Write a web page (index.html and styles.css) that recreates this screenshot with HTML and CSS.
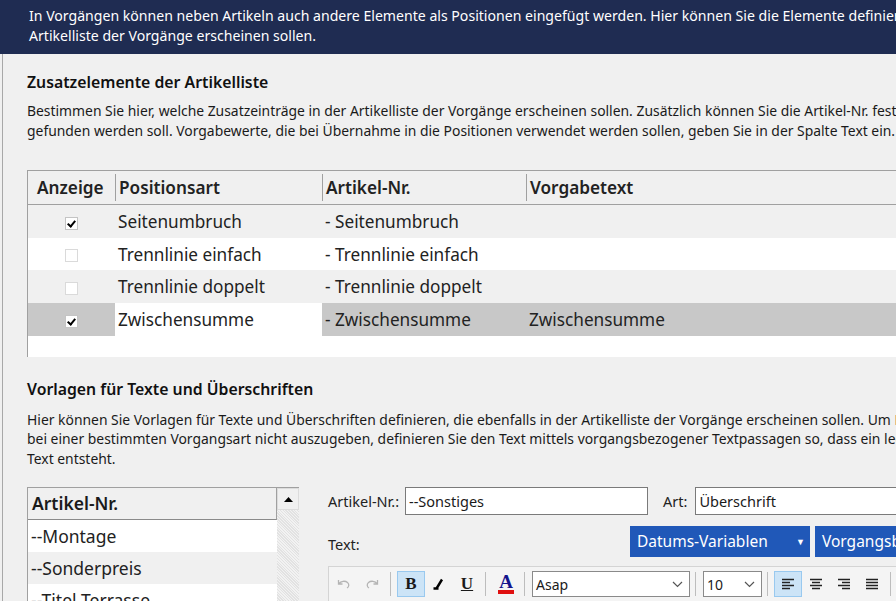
FILE: index.html
```html
<!DOCTYPE html>
<html lang="de">
<head>
  <meta charset="UTF-8">
  <title>Zusatzelemente der Artikelliste</title>
  <link rel="stylesheet" href="styles.css">
</head>
<body>
  <div class="banner">
    In Vorgängen können neben Artikeln auch andere Elemente als Positionen eingefügt werden. Hier können Sie die Elemente definieren, die in der<br>
    Artikelliste der Vorgänge erscheinen sollen.
  </div>

  <div class="page">
    <h2 class="section-title">Zusatzelemente der Artikelliste</h2>
    <p class="section-text">Bestimmen Sie hier, welche Zusatzeinträge in der Artikelliste der Vorgänge erscheinen sollen. Zusätzlich können Sie die Artikel-Nr. festlegen, unter der das Element<br>
      gefunden werden soll. Vorgabewerte, die bei Übernahme in die Positionen verwendet werden sollen, geben Sie in der Spalte Text ein.</p>

    <div class="grid">
      <table class="grid-table">
        <colgroup>
          <col class="col-show">
          <col class="col-type">
          <col class="col-nr">
          <col>
        </colgroup>
        <thead>
          <tr>
            <th class="head-show">Anzeige</th>
            <th><span>Positionsart</span></th>
            <th><span>Artikel-Nr.</span></th>
            <th><span>Vorgabetext</span></th>
          </tr>
        </thead>
        <tbody>
          <tr class="alt">
            <td class="cell-show"><span class="check checked"></span></td>
            <td>Seitenumbruch</td>
            <td>- Seitenumbruch</td>
            <td></td>
          </tr>
          <tr>
            <td class="cell-show"><span class="check"></span></td>
            <td>Trennlinie einfach</td>
            <td>- Trennlinie einfach</td>
            <td></td>
          </tr>
          <tr class="alt">
            <td class="cell-show"><span class="check"></span></td>
            <td>Trennlinie doppelt</td>
            <td>- Trennlinie doppelt</td>
            <td></td>
          </tr>
          <tr class="selected">
            <td class="cell-show"><span class="check checked"></span></td>
            <td class="focus">Zwischensumme</td>
            <td>- Zwischensumme</td>
            <td>Zwischensumme</td>
          </tr>
        </tbody>
      </table>
      <div class="grid-empty"></div>
    </div>

    <h2 class="section-title second">Vorlagen für Texte und Überschriften</h2>
    <p class="section-text second">Hier können Sie Vorlagen für Texte und Überschriften definieren, die ebenfalls in der Artikelliste der Vorgänge erscheinen sollen. Um Diese<br>
      bei einer bestimmten Vorgangsart nicht auszugeben, definieren Sie den Text mittels vorgangsbezogener Textpassagen so, dass ein leerer<br>
      Text entsteht.</p>

    <div class="templates">
      <div class="list">
        <div class="list-body">
          <div class="list-head">Artikel-Nr.</div>
          <div class="list-item">--Montage</div>
          <div class="list-item alt">--Sonderpreis</div>
          <div class="list-item">--Titel Terrasse</div>
        </div>
        <div class="scrollbar">
          <div class="scroll-btn">
            <svg width="9" height="5" viewBox="0 0 9 5"><path d="M0 5 L4.5 0 L9 5 Z" fill="#000"/></svg>
          </div>
          <div class="scroll-track"></div>
        </div>
      </div>

      <div class="editor">
        <div class="form-row">
          <label class="form-label">Artikel-Nr.:</label>
          <div class="input nr-input">--Sonstiges</div>
          <label class="form-label art-label">Art:</label>
          <div class="input art-input">Überschrift</div>
        </div>

        <div class="text-row">
          <span class="form-label">Text:</span>
          <div class="var-buttons">
            <div class="var-btn">Datums-Variablen <span class="caret">&#9660;</span></div>
            <div class="var-btn">Vorgangsbezogene Variablen <span class="caret">&#9660;</span></div>
          </div>
        </div>

        <div class="toolbar">
          <span class="tool">
            <svg width="16" height="16" viewBox="0 0 16 16"><path d="M2.5 4 V8 H6.5 M2.8 7.7 C5 5 9 4.5 11.5 6.5 C13.5 8.2 13 11 11 12" fill="none" stroke="#b4b4b4" stroke-width="1.3"/></svg>
          </span>
          <span class="tool">
            <svg width="16" height="16" viewBox="0 0 16 16"><path d="M13.5 4 V8 H9.5 M13.2 7.7 C11 5 7 4.5 4.5 6.5 C2.5 8.2 3 11 5 12" fill="none" stroke="#b4b4b4" stroke-width="1.3"/></svg>
          </span>
          <span class="sep"></span>
          <span class="tool active bold">B</span>
          <span class="tool">
            <svg width="16" height="16" viewBox="0 0 16 16"><path d="M11 3.5 L5.5 12.5 M2.5 12.5 L7.5 12.5" fill="none" stroke="#000" stroke-width="2.4"/></svg>
          </span>
          <span class="tool underline">U</span>
          <span class="sep"></span>
          <span class="tool color">A<span class="color-bar"></span></span>
          <span class="sep"></span>
          <div class="select font-select">Asap
            <svg width="11" height="7" viewBox="0 0 11 7"><path d="M1 1 L5.5 5.5 L10 1" fill="none" stroke="#555" stroke-width="1.2"/></svg>
          </div>
          <span class="sep"></span>
          <div class="select size-select">10
            <svg width="11" height="7" viewBox="0 0 11 7"><path d="M1 1 L5.5 5.5 L10 1" fill="none" stroke="#555" stroke-width="1.2"/></svg>
          </div>
          <span class="sep"></span>
          <span class="tool active">
            <svg width="16" height="16" viewBox="0 0 16 16"><path d="M2 3.5 H14 M2 6.5 H10 M2 9.5 H14 M2 12.5 H10" stroke="#222" stroke-width="1.4"/></svg>
          </span>
          <span class="tool">
            <svg width="16" height="16" viewBox="0 0 16 16"><path d="M2 3.5 H14 M4 6.5 H12 M2 9.5 H14 M4 12.5 H12" stroke="#222" stroke-width="1.4"/></svg>
          </span>
          <span class="tool">
            <svg width="16" height="16" viewBox="0 0 16 16"><path d="M2 3.5 H14 M6 6.5 H14 M2 9.5 H14 M6 12.5 H14" stroke="#222" stroke-width="1.4"/></svg>
          </span>
          <span class="tool">
            <svg width="16" height="16" viewBox="0 0 16 16"><path d="M2 3.5 H14 M2 6.5 H14 M2 9.5 H14 M2 12.5 H14" stroke="#222" stroke-width="1.4"/></svg>
          </span>
          <span class="sep"></span>
        </div>
      </div>
    </div>
  </div>
</body>
</html>
```

FILE: styles.css
```css
html, body {
  margin: 0;
  padding: 0;
  overflow: hidden;
}
body {
  background-color: #f0f0f0;
  font-family: "Noto Sans", "Open Sans", sans-serif;
  color: #1a1a1a;
  width: 896px;
  height: 601px;
}
.banner {
  background-color: #1f2c52;
  color: #fff;
  font-size: 14.1px;
  line-height: 20px;
  padding: 6px 0 8px 29px;
  height: 40px;
  white-space: nowrap;
  overflow: hidden;
}
.page {
  margin-left: 2px;
  border-left: 1px solid #a8a8a8;
  padding-left: 24px;
  height: 547px;
  overflow: hidden;
}
.section-title {
  margin: 0;
  padding-top: 17px;
  font-size: 15.8px;
  font-weight: 600;
  line-height: 22px;
  color: #111;
  white-space: nowrap;
}
.section-title.second {
  padding-top: 21px;
}
.section-text {
  margin: 8px 0 0;
  font-size: 13.9px;
  line-height: 19.5px;
  white-space: nowrap;
}
.section-text.second {
  margin-top: 10px;
}

/* grid of additional elements */
.grid {
  margin-top: 30px;
  border-top: 1px solid #a0a0a0;
  border-left: 1px solid #a0a0a0;
  width: 1000px;
  background-color: #fff;
}
.grid-table {
  border-collapse: collapse;
  table-layout: fixed;
  width: 100%;
  font-size: 17.2px;
}
.col-show { width: 87px; }
.col-type { width: 207px; }
.col-nr { width: 204px; }
.grid-table th {
  background-color: #f0f0f0;
  height: 33px;
  padding: 0;
  text-align: left;
  font-weight: 600;
  border-bottom: 1px solid #a0a0a0;
  color: #222;
  white-space: nowrap;
}
.grid-table th span {
  display: block;
  border-left: 1px solid #a0a0a0;
  padding-left: 3px;
  line-height: 27px;
}
.grid-table th.head-show {
  padding-left: 9px;
}
.grid-table td {
  height: 32.7px;
  padding: 0 0 0 3px;
  color: #222;
  white-space: nowrap;
}
.grid-table td.cell-show {
  text-align: center;
  padding: 0;
}
.grid-table tr.alt td {
  background-color: #f0f0f0;
}
.grid-table tr.selected td {
  background-color: #c8c8c8;
}
.grid-table tr.selected td.focus {
  background-color: #fff;
}
.grid-empty {
  height: 21px;
  background-color: #fff;
}
.check {
  display: inline-block;
  width: 13px;
  height: 13px;
  box-sizing: border-box;
  border: 1px solid #dadada;
  background-color: #fff;
  vertical-align: middle;
  position: relative;
}
.check.checked {
  border-color: #c4c4c4;
}
.check.checked::after {
  content: "";
  position: absolute;
  left: 3px;
  top: 1px;
  width: 3px;
  height: 6px;
  border-right: 2px solid #000;
  border-bottom: 2px solid #000;
  transform: rotate(40deg);
}

/* templates */
.templates {
  display: flex;
  margin-top: 19px;
}
.list {
  display: flex;
  flex-shrink: 0;
  width: 271px;
  height: 130px;
  border-top: 1px solid #a0a0a0;
  border-left: 1px solid #a0a0a0;
  background-color: #fff;
  overflow: hidden;
}
.list-body {
  flex: 1;
  font-size: 17.5px;
  white-space: nowrap;
}
.list-head {
  height: 31px;
  line-height: 31px;
  padding-left: 4px;
  font-weight: 600;
  background-color: #f0f0f0;
  border-bottom: 1px solid #8a8a8a;
  border-right: 1px solid #a0a0a0;
}
.list-item {
  height: 32px;
  line-height: 32px;
  padding-left: 3px;
  color: #222;
}
.list-item.alt {
  background-color: #f0f0f0;
}
.scrollbar {
  width: 22px;
  display: flex;
  flex-direction: column;
}
.scroll-btn {
  box-sizing: border-box;
  height: 22px;
  display: flex;
  align-items: center;
  justify-content: center;
  background-color: #f0f0f0;
  border: 1px solid #dcdcdc;
}
.scroll-track {
  flex: 1;
  background-color: #e8e8e8;
  background-image: repeating-linear-gradient(45deg, #e2e2e2 0 1px, #f2f2f2 1px 2px);
}
.editor {
  margin-left: 29px;
  flex: 1;
  min-width: 0;
}
.form-row {
  display: flex;
  align-items: center;
  height: 28px;
}
.form-label {
  font-size: 14.5px;
  color: #222;
  white-space: nowrap;
}
.input {
  box-sizing: border-box;
  flex-shrink: 0;
  height: 28px;
  border: 1px solid #7a7a7a;
  background-color: #fff;
  font-size: 14.5px;
  line-height: 26px;
  padding-left: 3px;
  white-space: nowrap;
}
.nr-input {
  margin-left: 6px;
  width: 243px;
}
.art-label {
  margin-left: 15px;
}
.art-input {
  margin-left: 8px;
  width: 300px;
}
.text-row {
  display: flex;
  align-items: flex-end;
  margin-top: 11px;
  height: 31px;
}
.text-row .form-label {
  flex-shrink: 0;
  padding-bottom: 3px;
  width: 302px;
}
.var-buttons {
  display: flex;
  gap: 5px;
}
.var-btn {
  flex-shrink: 0;
  background-color: #2058b8;
  color: #fff;
  height: 31px;
  line-height: 31px;
  font-size: 15.5px;
  padding-left: 7px;
  width: 173px;
  white-space: nowrap;
  position: relative;
}
.var-btn + .var-btn {
  width: 230px;
}
.caret {
  position: absolute;
  right: 5px;
  font-size: 9px;
}
.toolbar {
  display: flex;
  align-items: center;
  margin-top: 9px;
  height: 34px;
  border-top: 1px solid #d4d4d4;
  border-left: 1px solid #d4d4d4;
  background-color: #f4f4f4;
  padding-left: 1px;
  width: 600px;
}
.tool {
  flex-shrink: 0;
  width: 28px;
  height: 26px;
  box-sizing: border-box;
  display: flex;
  align-items: center;
  justify-content: center;
  border: 1px solid transparent;
  font-family: "Liberation Serif", serif;
  font-size: 17px;
  font-weight: bold;
  position: relative;
}
.tool.active {
  background-color: #cce4f7;
  border-color: #99c9ef;
}
.tool.underline {
  text-decoration: underline;
}
.tool.color {
  color: #14148c;
  font-size: 19px;
  padding-bottom: 4px;
}
.color-bar {
  position: absolute;
  left: 5px;
  right: 5px;
  bottom: 2px;
  height: 4px;
  background-color: #e01010;
}
.sep {
  flex-shrink: 0;
  width: 1px;
  height: 24px;
  background-color: #bdbdbd;
  margin: 0 6px 0 4px;
}
.select {
  flex-shrink: 0;
  box-sizing: border-box;
  height: 26px;
  border: 1px solid #8a8a8a;
  background-color: #fff;
  font-size: 14px;
  display: flex;
  align-items: center;
  justify-content: space-between;
  padding: 0 6px 0 3px;
  margin: 0 1px;
}
.font-select {
  width: 158px;
}
.size-select {
  width: 59px;
}
```
